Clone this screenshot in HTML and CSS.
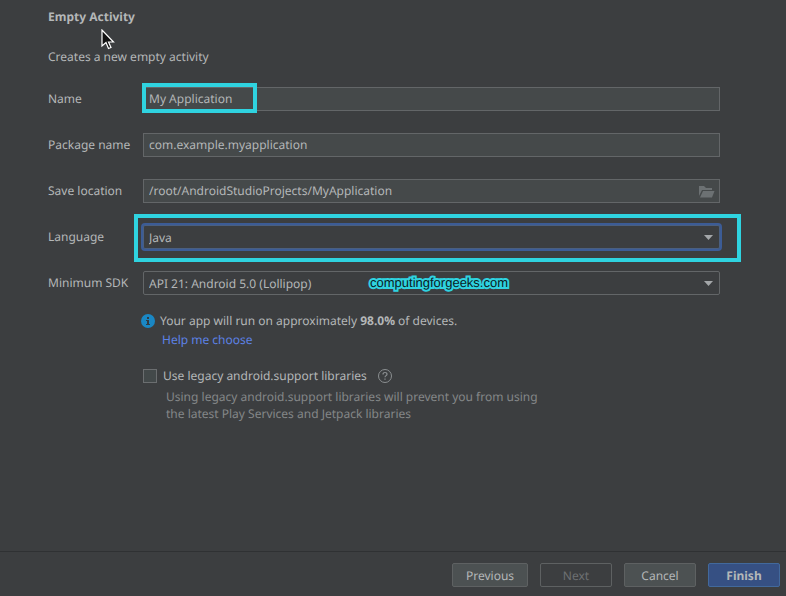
FILE: index.html
```html
<!DOCTYPE html>
<html lang="en">
<head>
    <meta charset="UTF-8">
    <meta name="viewport" content="width=device-width, initial-scale=1.0">
    <title>Empty Activity</title>
    <link rel="stylesheet" href="styles.css">
</head>
<body>

    <form class="wizard">
        <main class="content">
            <h1>Empty Activity</h1>
            <p class="description">Creates a new empty activity</p>

            <div class="fields">
                <label for="name">Name</label>
                <div class="control">
                    <input type="text" id="name" value="My Application">
                    <span class="mark mark-name"></span>
                </div>

                <label for="package">Package name</label>
                <div class="control">
                    <input type="text" id="package" value="com.example.myapplication">
                </div>

                <label for="location">Save location</label>
                <div class="control">
                    <input type="text" id="location" value="/root/AndroidStudioProjects/MyApplication">
                    <button type="button" class="browse" aria-label="Browse">
                        <svg width="16" height="12" viewBox="0 0 16 12" fill="#6c7173">
                            <path d="M0 10V0h5l2 2h6v2H3z"/>
                            <path d="M1 11.500 4 5h11.500L13 11.500z"/>
                        </svg>
                    </button>
                </div>

                <label for="language">Language</label>
                <div class="control">
                    <select id="language" class="focused">
                        <option>Java</option>
                        <option>Kotlin</option>
                    </select>
                    <svg class="arrow" width="9" height="5" viewBox="0 0 9 5"><path d="M0 0h9L4.500 5z"/></svg>
                    <span class="mark mark-language"></span>
                </div>

                <label for="sdk">Minimum SDK</label>
                <div class="control">
                    <select id="sdk">
                        <option>API 21: Android 5.0 (Lollipop)</option>
                    </select>
                    <svg class="arrow" width="9" height="5" viewBox="0 0 9 5"><path d="M0 0h9L4.500 5z"/></svg>
                    <span class="watermark">computingforgeeks.com</span>
                </div>
            </div>

            <div class="details">
                <p class="info">
                    <svg width="14" height="14" viewBox="0 0 14 14">
                        <circle cx="7" cy="7" r="7" fill="#1a87c4"/>
                        <path d="M6 3h2v2H6zM5 6h3v4h1v1H5v-1h1V7H5z" fill="#2f3b43"/>
                    </svg>
                    <span>Your app will run on approximately <strong>98.0%</strong> of devices.</span>
                </p>
                <a href="#" class="help">Help me choose</a>

                <div class="legacy">
                    <input type="checkbox" id="legacy">
                    <label for="legacy">Use legacy android.support libraries</label>
                    <svg width="16" height="16" viewBox="0 0 16 16" fill="none" stroke="#8b8f91">
                        <circle cx="8" cy="8" r="6.500"/>
                        <path d="M6 6.500C6 5.200 6.900 4.500 8 4.500s2 .7 2 1.800C10 7.600 8 7.700 8 9.300M8 10.500v1.300" stroke-width="1.200"/>
                    </svg>
                </div>
                <p class="note">Using legacy android.support libraries will prevent you from using the latest Play Services and Jetpack libraries</p>
            </div>
        </main>

        <footer class="buttons">
            <button type="button" class="previous">Previous</button>
            <button type="button" disabled>Next</button>
            <button type="button">Cancel</button>
            <button type="submit" class="finish">Finish</button>
        </footer>
    </form>

    <svg class="cursor" width="14" height="22" viewBox="0 0 14 22">
        <path d="M1 1v16l4-3.500 2.500 6 2.500-1-2.500-5.500H12.500z" fill="#111" stroke="#fff" stroke-width="1.200"/>
    </svg>

</body>
</html>
```

FILE: styles.css
```css
* {
    box-sizing: border-box;
}

body {
    margin: 0;
    background-color: #3c3e40;
    color: #b4b7b8;
    font-family: "Noto Sans", "Open Sans", sans-serif;
    font-size: 12px;
    line-height: 18px;
    text-rendering: geometricPrecision;
}

h1,
p {
    margin: 0;
}

input,
select,
button {
    font: inherit;
    color: inherit;
    text-rendering: inherit;
}

.wizard {
    display: flex;
    flex-direction: column;
    min-height: 100vh;
}

.content {
    flex: 1;
    padding: 8px 66px 24px 48px;
}

h1 {
    font-size: 12px;
    line-height: 18px;
    margin-bottom: 22px;
}

.description {
    margin-bottom: 21px;
}

.fields {
    display: grid;
    grid-template-columns: 95px 1fr;
    row-gap: 22px;
    align-items: center;
}

.control {
    position: relative;
}

.control input,
.control select {
    display: block;
    width: 100%;
    height: 24px;
    padding: 0 5px;
    border: 1px solid #636668;
    border-radius: 0;
    outline: none;
    background-color: #45494a;
}

.control input {
    padding-bottom: 2px;
}

.control select {
    appearance: none;
    padding-top: 1px;
    background-color: #3c3e40;
    border-radius: 2px;
}

.control select.focused {
    border-color: #4a5f80;
    box-shadow: 0 0 0 2px #3c5c96;
}

.arrow {
    position: absolute;
    top: 10px;
    right: 7px;
    fill: #a4a7a9;
    pointer-events: none;
}

.browse {
    position: absolute;
    top: 7px;
    right: 5px;
    padding: 0;
    border: none;
    background: none;
    line-height: 0;
}

/* highlight frames drawn over the form */
.mark {
    position: absolute;
    border: 4px solid #2fd3e0;
    pointer-events: none;
}

.mark-name {
    top: -4px;
    left: -1px;
    width: 115px;
    height: 30px;
}

.mark-language {
    top: -11px;
    right: -21px;
    bottom: -13px;
    left: -9px;
}

.watermark {
    position: absolute;
    top: 3px;
    left: 39%;
    padding-left: 2px;
    color: #0b2024;
    font-family: "Liberation Sans", Arial, sans-serif;
    font-size: 13px;
    -webkit-text-stroke: 4px #2fd3e0;
    paint-order: stroke fill;
    pointer-events: none;
}

.details {
    padding: 17px 0 0 93px;
}

.info {
    display: flex;
    align-items: center;
    gap: 5px;
}

.help {
    display: block;
    width: fit-content;
    margin: 1px 0 18px 21px;
    color: #5c82e6;
    text-decoration: none;
}

.legacy {
    display: flex;
    align-items: center;
    padding-left: 2px;
}

.legacy input {
    appearance: none;
    width: 14px;
    height: 14px;
    margin: 0 6px 0 0;
    border: 1px solid #6b6e70;
    background-color: #43494a;
}

.legacy svg {
    margin-left: 10px;
}

.note {
    max-width: 400px;
    margin-top: 3px;
    padding-left: 25px;
    color: #848788;
    line-height: 17px;
}

.buttons {
    display: flex;
    justify-content: flex-end;
    gap: 12px;
    padding: 11px 6px 9px;
    border-top: 1px solid #2f3133;
}

.buttons button {
    width: 72px;
    height: 24px;
    padding: 2px 0 0;
    border: 1px solid #5e6162;
    border-radius: 2px;
    background-color: #4c5152;
}

.buttons .previous {
    width: 76px;
}

.buttons button:disabled {
    background-color: transparent;
    color: #6d7072;
}

.buttons .finish {
    border-color: #42699c;
    background-color: #365083;
    font-weight: bold;
}

.cursor {
    position: absolute;
    top: 29px;
    left: 101px;
    pointer-events: none;
}
```
